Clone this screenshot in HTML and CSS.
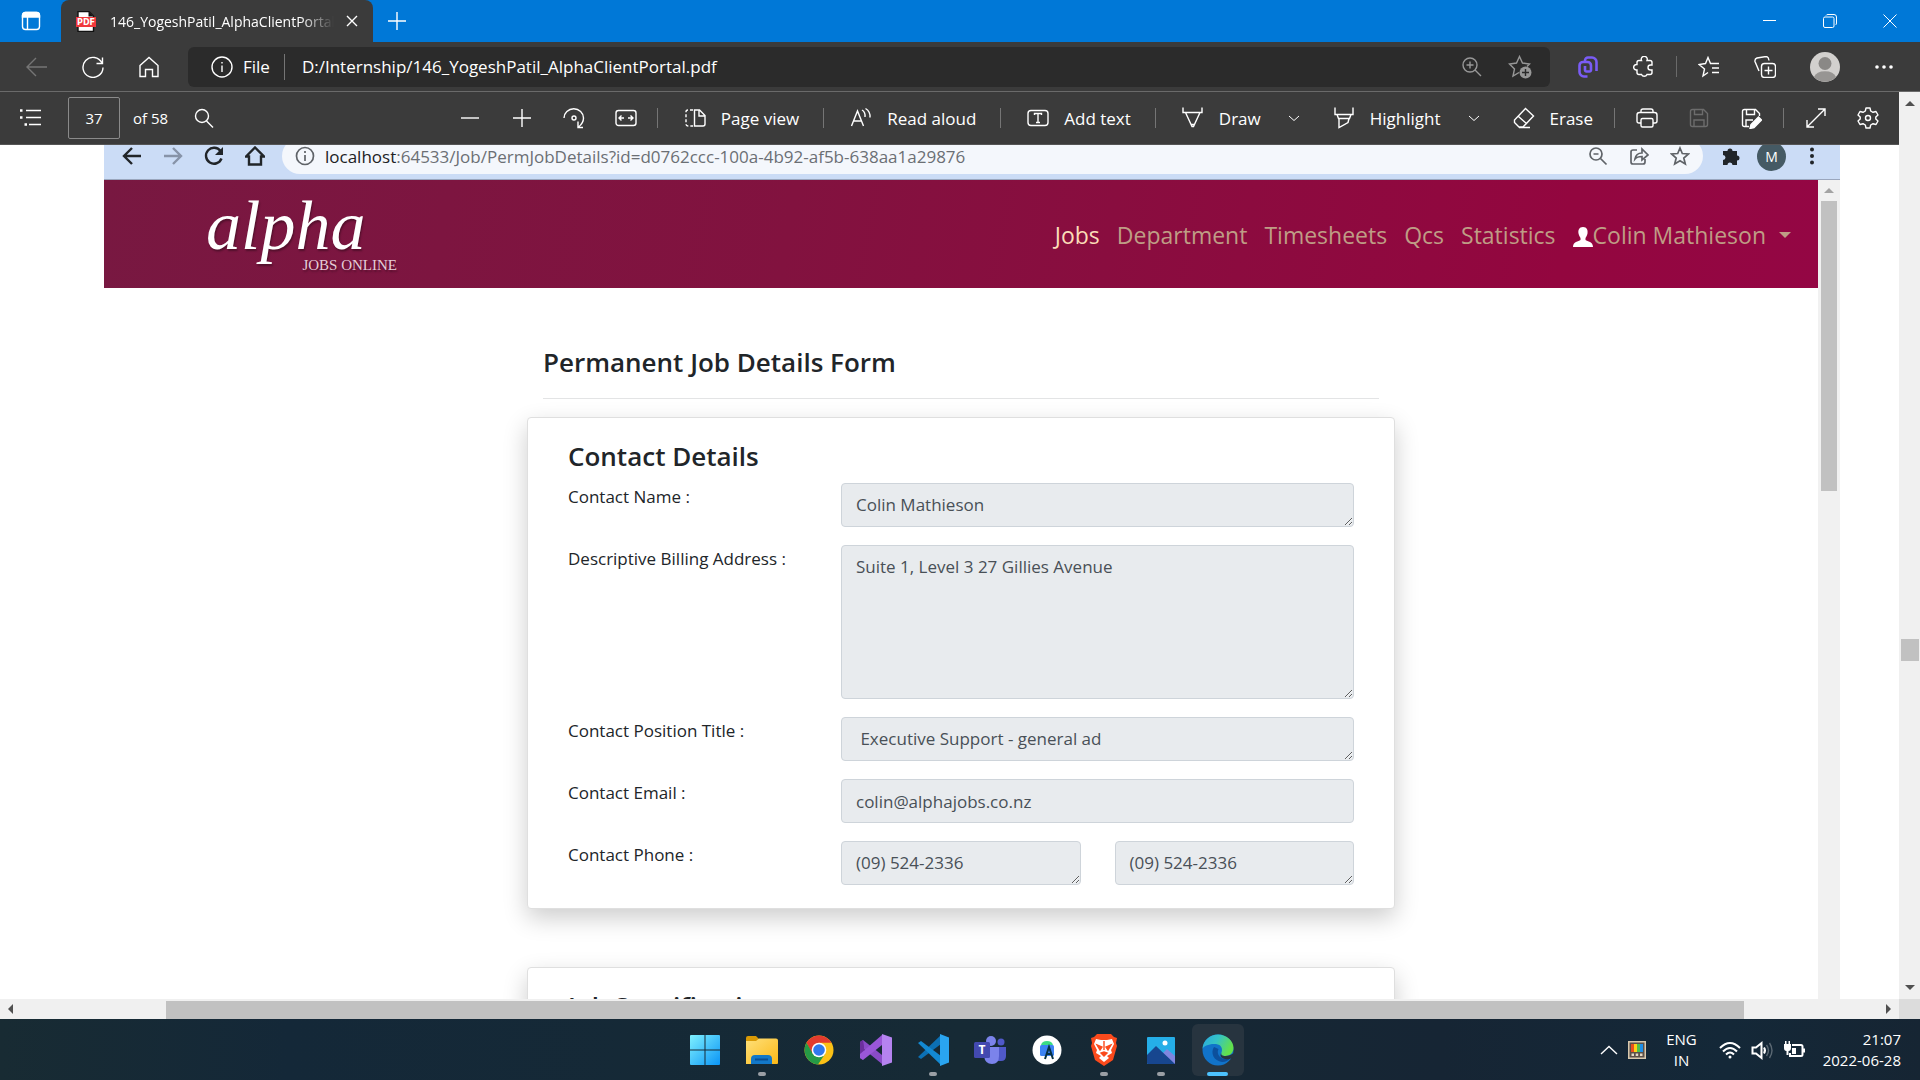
FILE: index.html
```html
<!DOCTYPE html>
<html lang="en">
<head>
<meta charset="utf-8">
<title>146_YogeshPatil_AlphaClientPortal.pdf</title>
<link rel="stylesheet" href="styles.css">
</head>
<body>
<header class="tabbar">
  <button class="bare tab-actions" aria-label="Tab actions"><svg class="i20" viewBox="0 0 20 20"><rect x="1.500" y="1.500" width="17" height="17" rx="3"/><path d="M1.500 6V4.500a3 3 0 0 1 3-3h11a3 3 0 0 1 3 3V6z" fill="currentColor"/><path d="M6.500 6v12.500"/></svg></button>
  <div class="tab">
    <svg class="pdf-icon" viewBox="0 0 20 21"><path d="M2 .5h11l4.500 4.500v15.500H2z" fill="#fff" stroke="#111"/><path d="M12.500.5 17.500 5.500h-5z" fill="#111" stroke="none"/><rect y="6" width="20" height="10" fill="#f0383c" stroke="none"/><text x="10" y="14" text-anchor="middle" class="pdf-word">PDF</text></svg>
    <span class="tab-title">146_YogeshPatil_AlphaClientPortal.pdf</span>
    <button class="bare" aria-label="Close tab"><svg class="i12" viewBox="0 0 12 12"><path d="M1 1l10 10M11 1 1 11"/></svg></button>
  </div>
  <button class="bare new-tab" aria-label="New tab"><svg class="i20" viewBox="0 0 20 20"><path d="M10 1v18M1 10h18"/></svg></button>
  <div class="window-controls">
    <button class="bare" aria-label="Minimize"><svg class="i14" viewBox="0 0 14 14"><path d="M0 6.500h13"/></svg></button>
    <button class="bare" aria-label="Restore"><svg class="i14" viewBox="0 0 14 14"><rect x=".5" y="3" width="10.500" height="10.500" rx="1.500"/><path d="M3 1.500Q3.500.5 5 .5h6A2.500 2.500 0 0 1 13.500 3v6q0 1.500-1 2"/></svg></button>
    <button class="bare" aria-label="Close"><svg class="i14" viewBox="0 0 14 14"><path d="M.5.5l13 13M13.500.5l-13 13"/></svg></button>
  </div>
</header>

<nav class="edge-bar" aria-label="Browser">
  <button class="bare dim" aria-label="Back"><svg class="i22" viewBox="0 0 22 22"><path d="M21 11H1M10 2l-9 9 9 9"/></svg></button>
  <button class="bare" aria-label="Refresh"><svg class="i22" viewBox="0 0 22 22"><path d="M20 7A10 10 0 1 0 21 11.500M20.500 1.500V7.500H14.500"/></svg></button>
  <button class="bare" aria-label="Home"><svg class="i22" viewBox="0 0 22 22"><path d="M2 9.500 11 1.500l9 8V20.500h-5.500v-7h-7v7H2z"/></svg></button>
  <div class="address">
    <svg class="i22" viewBox="0 0 22 22"><circle cx="11" cy="11" r="10"/><path d="M11 9.500V16M11 6v1.500"/></svg>
    <span class="scheme">File</span>
    <input class="url" aria-label="Address" value="D:/Internship/146_YogeshPatil_AlphaClientPortal.pdf">
    <button class="bare muted" aria-label="Zoom"><svg class="i20" viewBox="0 0 20 20"><circle cx="8" cy="8" r="7"/><path d="M8 4.500v7M4.500 8h7M13 13l6 6"/></svg></button>
    <button class="bare muted" aria-label="Add to favourites"><svg class="i24" viewBox="0 0 24 24"><path d="M11 17.500 5 21l1.500-7L1.500 9l7-1L11.500 1.500 14.500 8l7 1-2.500 2.500"/><circle cx="17.500" cy="17.500" r="6" fill="currentColor" stroke="none"/><path d="M17.500 14v7M14 17.500h7" stroke="#2b2b2b"/></svg></button>
  </div>
  <button class="bare clip" aria-label="Clipboard"><svg class="i22" viewBox="0 0 22 22"><path d="M8 5.500V4.500a3 3 0 0 1 3-3h4A4.500 4.500 0 0 1 19.500 6v9M10.500 20.500H7A4.500 4.500 0 0 1 2.500 16V9.500A3.500 3.500 0 0 1 6 6h4.500A3.500 3.500 0 0 1 14 9.500V14a1.500 1.500 0 0 1-1.500 1.500H9.500A1.500 1.500 0 0 1 8 14v-4"/></svg></button>
  <button class="bare" aria-label="Extensions"><svg class="i22" viewBox="0 0 22 22"><path d="M6 4.500h2.500a3 3 0 1 1 5.500 0h3q2 0 2 2V9h-1.500a2.500 2.500 0 0 0 0 5H19v2.500q0 2-2 2h-3a3 3 0 0 1-5.500 0H6q-2 0-2-2V14a2.800 2.800 0 1 1 0-5.500V6.500q0-2 2-2z"/></svg></button>
  <span class="edge-sep"></span>
  <button class="bare" aria-label="Favourites"><svg class="i22" viewBox="0 0 22 22"><path d="M10 16.500 5 20l1.500-7L1 8.500l6.500-1L10 1.500l2.500 6H21M14 12h7M14 16.500h7"/></svg></button>
  <button class="bare" aria-label="Collections"><svg class="i22" viewBox="0 0 22 22"><rect x="7.500" y="7.500" width="14" height="14" rx="3"/><path d="M14.500 10.500v8M10.500 14.500h8M5 15 1 5.500Q.5 3 3 2l9-1.500Q14.500.5 15 4.500"/></svg></button>
  <button class="bare" aria-label="Profile"><svg class="i30" viewBox="0 0 30 30" stroke="none"><circle cx="15" cy="15" r="15" fill="#d2d0ce"/><circle cx="15" cy="11.500" r="6.500" fill="#8a8886"/><path d="M4 25a11.500 8 0 0 1 22 0A15 15 0 0 1 4 25z" fill="#979593"/></svg></button>
  <button class="bare" aria-label="Settings and more"><svg class="i20 solid" viewBox="0 0 20 20"><circle cx="3" cy="10" r="1.800"/><circle cx="10" cy="10" r="1.800"/><circle cx="17" cy="10" r="1.800"/></svg></button>
</nav>

<main class="viewer">
  <div class="viewer-main">
    <div class="pdf-bar" role="toolbar" aria-label="PDF tools">
      <div class="pdf-left">
        <button class="bare" aria-label="Contents"><svg class="i22" viewBox="0 0 22 22"><path d="M6 3.500h15M6 10.500h15M9 17.500h12"/><path d="M0 3.500h2.500M0 10.500h2.500M4.500 17.500H7" stroke-width="2.500"/></svg></button>
        <input class="page-no" aria-label="Page number" value="37">
        <span class="page-count">of 58</span>
        <button class="bare find" aria-label="Find"><svg class="i20" viewBox="0 0 20 20"><circle cx="8" cy="8" r="6.500"/><path d="M12.500 13 19 19.500"/></svg></button>
      </div>
      <div class="pdf-tools">
        <button class="bare" aria-label="Zoom out"><svg class="i22" viewBox="0 0 22 22"><path d="M2 11h18"/></svg></button>
        <button class="bare sp" aria-label="Zoom in"><svg class="i22" viewBox="0 0 22 22"><path d="M2 11h18M11 2v18"/></svg></button>
        <button class="bare sp" aria-label="Rotate"><svg class="i22" viewBox="0 0 22 22"><path d="M1 11A9.500 9 0 0 1 20.500 11Q20.500 16 15.500 20M15 14.500v6h5"/><circle cx="11" cy="11" r="2"/></svg></button>
        <button class="bare sp" aria-label="Fit to width"><svg class="i22" viewBox="0 0 22 22"><rect x="1" y="3.500" width="20" height="15" rx="2.500"/><path d="M9 11H4M6.500 8.500 4 11l2.500 2.500M13 11h5M15.500 8.500 18 11l-2.500 2.500"/></svg></button>
        <span class="sep tight"></span>
        <button class="bare tool"><svg class="i22" viewBox="0 0 22 22"><path d="M9 3H4Q2 3 2 5v12q0 2 2 2h5" stroke-dasharray="3 2"/><path d="M10.500 3h5L21 8.500V17q0 2-2 2h-8.500zM15 3v6h6"/></svg>Page view</button>
        <span class="sep"></span>
        <button class="bare tool"><svg class="i22" viewBox="0 0 22 22"><path d="M1.500 19 7.500 4l6 15M3.500 14h8M12 3q3.500 2 3 7M15.500 1.500q5 3 4.500 9"/></svg>Read aloud</button>
        <span class="sep"></span>
        <button class="bare tool"><svg class="i22" viewBox="0 0 22 22"><rect x="1" y="3.500" width="20" height="15" rx="3"/><path d="M7.500 8V6.500h7V8M11 6.500v9M9 15.500h4"/></svg>Add text</button>
        <span class="sep"></span>
        <button class="bare tool"><svg class="i22" viewBox="0 0 22 22"><path d="M1 .5V5.500H20V.5M3.500 5.500 10 19.500h1.500L18 5.500M9 17.500h3.500"/></svg>Draw</button>
        <button class="bare chev" aria-label="Draw options"><svg class="i14" viewBox="0 0 14 14"><path d="M2 5l5 4.500L12 5"/></svg></button>
        <button class="bare tool after-chev"><svg class="i22" viewBox="0 0 22 22"><path d="M2 .5V7.500H20V.5M4 7.500 5.500 11.500H16.500L18 7.500M6 11.500v9l9-5 1-4"/></svg>Highlight</button>
        <button class="bare chev" aria-label="Highlight options"><svg class="i14" viewBox="0 0 14 14"><path d="M2 5l5 4.500L12 5"/></svg></button>
        <button class="bare tool after-chev"><svg class="i22" viewBox="0 0 22 22"><path d="M12.500 1.500 20.500 9 10 20H6L1.500 15.500V13zM5.500 9.500 14 17M6 20.500h11"/></svg>Erase</button>
        <span class="sep even"></span>
        <button class="bare" aria-label="Print"><svg class="i22" viewBox="0 0 22 22"><path d="M5 16H3Q1 16 1 14V8q0-2.500 2.500-2.500h15Q21 5.500 21 8v6q0 2-2 2h-2M5 5.500V4q0-2 2-2h8q2 0 2 2v1.500"/><rect x="5" y="11.500" width="12" height="8.500" rx="1.500"/></svg></button>
        <button class="bare sp faint" aria-label="Save"><svg class="i22" viewBox="0 0 22 22"><path d="M4.500 2.500h11l4 4V17.500q0 2-2 2h-13q-2 0-2-2V4.500q0-2 2-2zM6.500 2.500V7.500h8v-5M6 19.500v-6.500h10v6.500"/></svg></button>
        <button class="bare sp" aria-label="Save as"><svg class="i22" viewBox="0 0 22 22"><path d="M9 19.500H4.500q-2 0-2-2V4.500q0-2 2-2h11l4 4V9M6.500 2.500V7.500h8v-5M6 19.500v-6.500h7"/><path d="M18.500 10 21.500 13l-7.500 7.500-4 1 1-4z" fill="currentColor"/></svg></button>
        <span class="sep even"></span>
        <button class="bare" aria-label="Full screen"><svg class="i22" viewBox="0 0 22 22"><path d="M2 20 20 2M13 2h7v7M2 13v7h7"/></svg></button>
        <button class="bare sp" aria-label="Settings"><svg class="i22" viewBox="0 0 22 22"><path d="M9 1h4l.7 3 2.300 1.300L19 4.500l2 3.500-2.200 2v2L21 14l-2 3.500-3-.8L13.700 18 13 21H9l-.7-3L6 16.700l-3 .8L1 14l2.200-2v-2L1 8l2-3.500 3 .8L8.300 4z" stroke-linejoin="round"/><circle cx="11" cy="11" r="2.500"/></svg></button>
      </div>
    </div>

    <div class="document">
      <div class="sheet">
        <div class="chrome-bar">
          <svg class="i20" viewBox="0 0 20 20"><path d="M19 10H3M10 2l-8 8 8 8"/></svg>
          <svg class="i20 pale" viewBox="0 0 20 20"><path d="M1 10h16M10 2l8 8-8 8"/></svg>
          <svg class="i20" viewBox="0 0 20 20"><path d="M16.500 5A8 8 0 1 0 17.500 12.500"/><path d="M19 1v8h-8z" fill="currentColor" stroke="none"/></svg>
          <svg class="i20" viewBox="0 0 20 20"><path d="M1 10.500 10 1.500l9 9h-3V18.500H4v-8z"/></svg>
          <div class="omnibox">
            <svg class="i20" viewBox="0 0 20 20"><circle cx="10" cy="10" r="8.500"/><path d="M10 9v6M10 5v2"/></svg>
            <span class="omni-url"><b>localhost</b>:64533/Job/PermJobDetails?id=d0762ccc-100a-4b92-af5b-638aa1a29876</span>
            <svg class="i20" viewBox="0 0 20 20"><circle cx="8" cy="8" r="6"/><path d="M5.500 8h5M12.500 12.500l6 6"/></svg>
            <svg class="i20" viewBox="0 0 20 20"><path d="M8 4H4Q2 4 2 6v10q0 2 2 2h10q2 0 2-2v-3M6 13q1-6 7-6V3l6 6-6 5v-3.500q-5 0-7 2.500z"/></svg>
            <svg class="i20" viewBox="0 0 20 20"><path d="M10 2l2.300 5.500 6.200.5-4.700 4 1.500 6-5.300-3.200L4.700 18l1.500-6-4.700-4 6.200-.5z"/></svg>
          </div>
          <svg class="i20" viewBox="0 0 20 20"><path d="M2 5h4.500a2.500 2.500 0 1 1 5 0H16v4.500a2.500 2.500 0 1 1 0 5V19h-4.500a2.500 2.500 0 0 0-5 0H2v-5a2.500 2.500 0 0 0 0-5z" fill="currentColor" stroke="none"/></svg>
          <span class="chrome-avatar">M</span>
          <svg class="i20 solid" viewBox="0 0 20 20"><circle cx="10" cy="3.500" r="2"/><circle cx="10" cy="10" r="2"/><circle cx="10" cy="16.500" r="2"/></svg>
        </div>

        <div class="site">
          <div class="site-main">
            <div class="navbar">
              <a class="brand" href="#"><span class="brand-name">alpha</span><span class="brand-sub">JOBS ONLINE</span></a>
              <nav class="links" aria-label="Site">
                <a class="on" href="#">Jobs</a>
                <a href="#">Department</a>
                <a href="#">Timesheets</a>
                <a href="#">Qcs</a>
                <a href="#">Statistics</a>
                <a class="user" href="#"><svg class="person" viewBox="0 0 20 20"><path d="M10 0c4 0 5 3 4.500 6.500C14 9 13 10 12.500 11v2c2 1.500 7.500 1.500 7.500 7H0c0-5.500 5.500-5.500 7.500-7v-2C7 10 6 9 5.500 6.500 5 3 6 0 10 0z"/></svg>Colin Mathieson<span class="caret"></span></a>
              </nav>
            </div>
            <div class="page-head"><h1>Permanent Job Details Form</h1></div>
            <form class="card">
              <h2>Contact Details</h2>
              <div class="row"><label for="name">Contact Name :</label><textarea id="name" rows="1" readonly>Colin Mathieson</textarea></div>
              <div class="row"><label for="addr">Descriptive Billing Address :</label><textarea id="addr" class="tall" rows="5" readonly>Suite 1, Level 3 27 Gillies Avenue</textarea></div>
              <div class="row"><label for="pos">Contact Position Title :</label><textarea id="pos" rows="1" readonly> Executive Support - general ad</textarea></div>
              <div class="row"><label for="mail">Contact Email :</label><input id="mail" type="email" value="colin@alphajobs.co.nz" readonly></div>
              <div class="row"><label for="phone">Contact Phone :</label><div class="pair"><textarea id="phone" rows="1" readonly>(09) 524-2336</textarea><textarea aria-label="Second contact phone" rows="1" readonly>(09) 524-2336</textarea></div></div>
            </form>
            <section class="card"><h2>Job Specification</h2></section>
          </div>
          <div class="inner-scroll"><span class="arrow up soft"></span><span class="inner-thumb"></span></div>
        </div>
      </div>
    </div>
    <div class="hscroll"><span class="arrow left"></span><div class="htrack"><span class="hthumb"></span></div><span class="arrow right"></span></div>
  </div>
  <div class="vscroll"><span class="arrow up"></span><div class="vtrack"><span class="vthumb"></span></div><span class="arrow down"></span><span class="corner"></span></div>
</main>

<footer class="taskbar">
  <div class="apps">
    <button class="bare app" aria-label="Start"><svg class="i32" viewBox="0 0 32 32" stroke="none"><defs><linearGradient id="win" x2="1" y2="1"><stop stop-color="#7ff1ff"/><stop offset="1" stop-color="#0a94f5"/></linearGradient></defs><path d="M1 2q0-1 1-1h13.500v14.500H1zM16.500 1H30q1 0 1 1v13.500H16.500zM1 16.500h14.500V31H2q-1 0-1-1zM16.500 16.500H31V30q0 1-1 1H16.500z" fill="url(#win)"/></svg></button>
    <button class="bare app open" aria-label="File Explorer"><svg class="i32" viewBox="0 0 32 32" stroke="none"><defs><linearGradient id="fold" x2="1" y2="1"><stop stop-color="#ffe07a"/><stop offset="1" stop-color="#fbb917"/></linearGradient></defs><path d="M0 4q0-2 2-2h8l3 3v5H0z" fill="#d99a06"/><path d="M0 7h10l3-2.500h17q2 0 2 2V29q0 1-1 1H0z" fill="url(#fold)"/><path d="M5 30v-5q0-4 4-4h13q4 0 4 4v5z" fill="#1378c8"/><path d="M9 25.500h13" stroke="#0a4f94" stroke-width="2"/></svg></button>
    <button class="bare app" aria-label="Chrome"><svg class="i32" viewBox="0 0 32 32" stroke="none"><circle cx="16" cy="16" r="14.500" fill="#fbc116"/><path d="M3.500 8.700A14.500 14.500 0 0 1 28.500 8.700H16L9 20z" fill="#e33b2e"/><path d="M3.500 8.700A14.500 14.500 0 0 0 15 30.500L22.300 19.600 9.700 19.600z" fill="#259a46"/><circle cx="16" cy="16" r="7.300" fill="#fff"/><circle cx="16" cy="16" r="5.800" fill="#3079ed"/></svg></button>
    <button class="bare app" aria-label="Visual Studio"><svg class="i32" viewBox="0 0 32 32" stroke="none"><path d="M3 6 22 21v9L0 12V8z" fill="#8a4bc8"/><path d="M0 8l3-2 1 6v8l-1 6-3-2z" fill="#6b2f9e"/><path d="M3 26 22 11V1L0 20v4z" fill="#9a57d8"/><path d="M22 0l10 3.500v25L22 32z" fill="#b583f0"/></svg></button>
    <button class="bare app open" aria-label="Visual Studio Code"><svg class="i32" viewBox="0 0 32 32" stroke="none"><path d="M1 23l3 2L24 10V1z" fill="#0c70b4"/><path d="M1 9l3-2 20 15v9z" fill="#1389d2"/><path d="M23 0l9 3.500v25L23 32z" fill="#2aa5f0"/></svg></button>
    <button class="bare app" aria-label="Teams"><svg class="i32" viewBox="0 0 32 32" stroke="none"><circle cx="27" cy="8" r="3.500" fill="#5059c9"/><path d="M22 13h10v9q0 5-5 5h-5z" fill="#5059c9"/><circle cx="17" cy="7" r="5" fill="#7b83eb"/><path d="M10 13h15v9q0 8-7 8t-8-8z" fill="#7b83eb"/><rect y="8" width="16" height="16" rx="1.500" fill="#4349b0"/><text x="8" y="20" text-anchor="middle" class="teams-t">T</text></svg></button>
    <button class="bare app" aria-label="Android Studio"><svg class="i32" viewBox="0 0 32 32" stroke="none"><ellipse cx="16" cy="16" rx="14.500" ry="14.500" fill="#fff"/><path d="M10 11q1-4 6-4t6 4z" fill="#3ddc84"/><rect x="9" y="11" width="14" height="11" rx="1.500" fill="#3c83f3"/><path d="M14 25 18 13l4 12M15.500 20h5" stroke="#073042" stroke-width="2" fill="none"/></svg></button>
    <button class="bare app open" aria-label="Brave"><svg class="i32" viewBox="0 0 32 32" stroke="none"><path d="M9 0h14l3 3 3 1-1 5 1 3-4 14-9 6-9-6L3 12l1-3-1-5 3-1z" fill="#fb4a1c"/><path d="M8 5l5 1h6l5-1 2 5-3 6 1 3-5 3 2 2-5 4-5-4 2-2-5-3 1-3-3-6z" fill="#fff"/><path d="M9 11l5 2-2 3zM23 11l-5 2 2 3zM13 19l3 3 3-3-3-1zM16 7v9" fill="#fb4a1c" stroke="#fb4a1c"/></svg></button>
    <button class="bare app open" aria-label="Photos"><svg class="i32" viewBox="0 0 32 32" stroke="none"><rect x="2" y="3" width="28" height="27" rx="1" fill="#25aee8"/><path d="M30 30V22L22 15l-6 6 9 9z" fill="#7f86e0"/><path d="M2 21l9-9 19 18H3q-1 0-1-1z" fill="#17468f"/><circle cx="20" cy="9" r="2.500" fill="#fff"/></svg></button>
    <button class="bare app open current" aria-label="Edge"><svg class="i32" viewBox="0 0 32 32" stroke="none"><defs><linearGradient id="ed" x2="1" y2=".4"><stop stop-color="#28a7e0"/><stop offset=".5" stop-color="#35c3c4"/><stop offset="1" stop-color="#63e04a"/></linearGradient></defs><circle cx="16" cy="16" r="15.500" fill="#1173c9"/><path d="M.5 15C1 6 8 .5 16 .5 25 .5 31.500 7 31.500 14c0 5-4 8-8 8-3.500 0-5-1.500-4-3.500 1.500-3 0-8-5.500-8.500C7 9.500 1.500 12 .5 15z" fill="url(#ed)"/><path d="M12 13c-4 6 0 14 8 15 4 0 7-2 8.500-4-4 2-10 1-12-3-1-2-1-4 0-6z" fill="#0c4f9c"/><path d="M19.500 18.500C18.500 21 20 22 23.500 22c3 0 6-1 8-3l-1 5-3 1q-5 1-8-1.500-2-2 0-5z" fill="#27343f"/></svg></button>
  </div>
  <div class="tray">
    <svg class="i18" viewBox="0 0 18 18"><path d="M1 13l8-7.500L17 13"/></svg>
    <svg class="i18" viewBox="0 0 18 18" stroke="none"><rect width="18" height="18" fill="#d8c9ae"/><rect x="1.500" y="1.500" width="15" height="15" fill="#5b5048"/><path d="M3 3h3v8H3z" fill="#e8501e"/><path d="M6 3h3v8H6z" fill="#fcd116"/><path d="M9 3h3v8H9z" fill="#4fc04a"/><path d="M12 3h3v8h-3z" fill="#1e90e8"/><path d="M3.500 12.500h2.500v2.500H3.500zM7.700 12.500h2.500v2.500H7.700zM12 12.500h2.500v2.500H12z" fill="#e4d8c4"/></svg>
    <span class="lang">ENG<br>IN</span>
    <svg class="i22 bold" viewBox="0 0 22 22"><path d="M1 9Q11-1 21 9M4 12.500q7-7 14 0M7 15.500q4-4 8 0"/><circle cx="11" cy="18" r="1.500" fill="currentColor" stroke="none"/></svg>
    <svg class="i22" viewBox="0 0 22 22"><path d="M1.500 8.500H5l5.500-4.500v15L5 14.500H1.500zM13 8.500q2 3 0 6" stroke-width="2"/><path d="M15.500 6q4 5.500 0 11M18.500 4q5 7.500 0 15" opacity=".3"/></svg>
    <svg class="i22 bold" viewBox="0 0 22 22"><path d="M9 6h9q1.500 0 1.500 1.500v8q0 1.500-1.500 1.500H7v-3M21 9.500v4"/><path d="M1 5h7v4q0 3-2.500 3v4h-2v-4Q1 12 1 9zM2 2h1.500v3H2zM5.500 2H7v3H5.500zM9 9h4v6H9z" fill="currentColor" stroke="none"/></svg>
    <time class="clock">21:07<br>2022-06-28</time>
  </div>
</footer>
</body>
</html>
```
FILE: styles.css
```css
* { box-sizing: border-box; }
body {
  margin: 0;
  height: 100vh;
  display: flex;
  flex-direction: column;
  overflow: hidden;
  background: #fff;
  color: #fff;
  font-family: "Open Sans", "Noto Sans", sans-serif;
  font-size: 17px;
}
svg { display: block; flex: none; fill: none; stroke: currentColor; stroke-width: 1.4; }
svg[stroke="none"] { stroke: none; }
svg.solid { fill: currentColor; stroke: none; }
svg.bold { stroke-width: 2; }
.i12 { width: 12px; height: 12px; }
.i14 { width: 14px; height: 14px; stroke-width: 1; }
.i18 { width: 18px; height: 18px; }
.i20 { width: 20px; height: 20px; }
.i22 { width: 22px; height: 22px; }
.i24 { width: 24px; height: 24px; }
.i30 { width: 30px; height: 30px; }
.i32 { width: 32px; height: 32px; }
.bare {
  flex: none;
  display: flex;
  align-items: center;
  padding: 0;
  border: 0;
  background: none;
  color: inherit;
  font: inherit;
}

/* Tab strip */
.tabbar { flex: none; display: flex; height: 42px; background: #0078d7; }
.tab-actions { width: 61px; padding-left: 21px; }
.tab {
  display: flex;
  align-items: center;
  width: 312px;
  padding: 0 15px;
  gap: 14px;
  background: #3b3b3b;
  border-radius: 8px 8px 0 0;
}
.pdf-icon { width: 20px; height: 21px; }
.pdf-word { font: bold 8px "DejaVu Sans", sans-serif; fill: #fff; stroke: none; }
.tab-title {
  flex: 1;
  overflow: hidden;
  white-space: nowrap;
  font-size: 14px;
  mask-image: linear-gradient(to right, #000 85%, transparent);
}
.tab .bare { margin-left: -2px; }
.new-tab { padding-left: 14px; }
.window-controls { display: flex; gap: 46px; margin-left: auto; padding-right: 23px; }

/* Browser toolbar */
.edge-bar {
  flex: none;
  display: flex;
  align-items: center;
  height: 50px;
  padding: 0 26px;
  gap: 34px;
  background: #3b3b3b;
  border-bottom: 1px solid #6a6a6a;
}
.dim { color: #757575; }
.muted { color: #989898; }
.faint { color: #6c6c6c; }
.address {
  flex: 1;
  display: flex;
  align-items: center;
  height: 40px;
  min-width: 0;
  margin: 0 -7px 0 -6px;
  padding: 0 18px 0 23px;
  background: #2b2b2b;
  border-radius: 6px;
}
.scheme { padding: 0 14px 0 10px; border-right: 1px solid #757575; line-height: 26px; }
.url {
  flex: 1;
  min-width: 0;
  padding: 0 0 0 17px;
  border: 0;
  background: none;
  color: #fff;
  font: inherit;
}
.address .bare { margin-left: 26px; }
.clip { color: #7a5cf5; }
.clip svg { stroke-width: 2.6; }
.edge-sep { width: 1px; height: 21px; margin: 0 -13px; background: #6a6a6a; }

/* Viewer frame */
.viewer { flex: 1; min-height: 0; display: flex; }
.viewer-main { flex: 1; min-width: 0; display: flex; flex-direction: column; }
.pdf-bar {
  flex: none;
  display: flex;
  align-items: center;
  justify-content: space-between;
  height: 53px;
  padding: 0 20px;
  background: #3b3b3b;
  border-bottom: 1px solid #555;
}
.pdf-left, .pdf-tools { display: flex; align-items: center; }
.page-no {
  width: 52px;
  height: 42px;
  margin: 0 13px 0 26px;
  border: 1px solid #8a8a8a;
  border-radius: 2px;
  background: none;
  color: #fff;
  font: inherit;
  font-size: 15px;
  text-align: center;
}
.page-count { font-size: 15px; }
.find { margin-left: 26px; }
.tool { gap: 15px; }
.sp { margin-left: 30px; }
.sep { width: 1px; height: 20px; margin: 0 26px 0 24px; background: #757575; }
.sep.tight { margin-left: 20px; }
.sep.even { margin: 0 21px; }
.chev { margin-left: 26px; }
.after-chev { margin-left: 32px; }

/* Scrollbars */
.vscroll {
  flex: none;
  width: 21px;
  display: flex;
  flex-direction: column;
  align-items: center;
  background: #f0f0f0;
  padding-top: 9px;
}
.vtrack { flex: 1; width: 18px; display: flex; flex-direction: column; }
.vtrack::before { content: ""; flex: 531 1 0; }
.vtrack::after { content: ""; flex: 323 1 0; }
.vthumb { height: 22px; background: #c1c1c1; }
.corner { width: 21px; height: 20px; margin-top: 9px; background: #dcdcdc; }
.hscroll { flex: none; display: flex; align-items: center; height: 20px; padding: 0 8px; background: #f0f0f0; }
.htrack { flex: 1; height: 18px; margin-top: 2px; display: flex; }
.htrack::before { content: ""; flex: 153 1 0; }
.htrack::after { content: ""; flex: 142 1 0; }
.hthumb { flex: 1578 1 0; background: #c1c1c1; }
.arrow { width: 0; height: 0; border: 5px solid transparent; }
.arrow.up { border-bottom-color: #505050; border-top: 0; }
.arrow.down { border-top-color: #505050; border-bottom: 0; }
.arrow.left { border-right-color: #505050; border-left: 0; }
.arrow.right { border-left-color: #505050; border-right: 0; }
.arrow.soft { border-bottom-color: #a3a3a3; }

/* PDF page */
.document { flex: 1; min-height: 0; overflow: hidden; padding: 0 59px 0 104px; }
.sheet { color: #212529; }
.chrome-bar {
  display: flex;
  align-items: center;
  height: 47px;
  margin-top: -12px;
  padding: 0 18px;
  gap: 21px;
  background: #cbdcf6;
  border-bottom: 1px solid #9aa6bd;
}
.chrome-bar svg { stroke-width: 2.4; }
.chrome-bar svg.solid { stroke: none; }
.pale { color: #8793a8; }
.omnibox {
  flex: 1;
  display: flex;
  align-items: center;
  height: 36px;
  margin: 0 -3px 0 -4px;
  padding: 0 13px;
  gap: 21px;
  border-radius: 18px;
  background: #f4f7fc;
  color: #5f6368;
}
.chrome-bar .omnibox svg { stroke-width: 1.7; }
.omni-url { flex: 1; margin-left: -11px; white-space: nowrap; color: #6b6f74; }
.omni-url b { font-weight: 400; color: #202124; }
.chrome-avatar {
  display: grid;
  place-items: center;
  width: 29px;
  height: 29px;
  margin: 0 -5px;
  border-radius: 50%;
  background: #455a64;
  color: #fff;
  font-size: 14px;
}
.site { display: flex; }
.site-main { flex: 1; min-width: 0; }
.navbar {
  display: flex;
  align-items: center;
  justify-content: space-between;
  height: 108px;
  padding: 0 27px 0 102px;
  background: linear-gradient(100deg, #781841, #82123f 40%, #93063f 85%, #940644);
}
.brand { display: flex; flex-direction: column; width: 191px; color: #fff; text-decoration: none; font-family: "Liberation Serif", serif; text-shadow: 1px 2px 2px #0005; }
.brand-name { font-size: 70px; line-height: 62px; font-style: italic; }
.brand-sub { align-self: flex-end; font-size: 15px; line-height: 16px; color: #e6cdd8; }
.links { display: flex; align-items: center; gap: 17px; padding-top: 2px; font-size: 23px; }
.links a { color: #bf9d85; text-decoration: none; }
.links .on { color: #fbdcb8; }
.links .user { display: flex; align-items: center; }
.person { width: 20px; height: 20px; margin-top: 4px; fill: #fff; stroke: none; }
.caret { margin-left: 13px; border: 6px solid transparent; border-top-color: #bf9d85; border-bottom: 0; }
.page-head { width: 836px; max-width: 100%; margin: 0 auto 18px; padding: 57px 0 19px; border-bottom: 1px solid #e3e4e5; }
h1, h2 { margin: 0; font-size: 26px; line-height: 34px; font-weight: 600; }
.card {
  width: 868px;
  max-width: 100%;
  margin: 0 auto 58px;
  padding: 21px 40px 23px;
  display: flex;
  flex-direction: column;
  gap: 18px;
  border: 1px solid #dfdfdf;
  border-radius: 4px;
  background: #fff;
  box-shadow: 0 9px 24px #0003;
}
.card h2 { margin-bottom: -8px; }
.row { display: grid; grid-template-columns: 273px 1fr; align-items: start; font-size: 17px; line-height: 28px; }
.row textarea, .row input {
  display: block;
  width: 100%;
  height: 44px;
  padding: 7px 14px;
  border: 1px solid #ced4da;
  border-radius: 4px;
  background: #e8ebee;
  color: #495057;
  font: inherit;
  overflow: hidden;
}
.row .tall { height: 154px; }
.pair { display: grid; grid-template-columns: 1fr 1fr; gap: 34px; }
.inner-scroll {
  flex: none;
  width: 22px;
  display: flex;
  flex-direction: column;
  align-items: center;
  gap: 8px;
  padding-top: 8px;
  background: #f1f1f1;
}
.inner-thumb { width: 16px; height: 290px; background: #c1c1c1; }

/* Taskbar */
.taskbar {
  flex: none;
  display: grid;
  grid-template-columns: 1fr auto 1fr;
  height: 61px;
  background: linear-gradient(to right, #182b33, #142838 15%, #162a35 50%, #162534 75%, #142838 90%, #162533);
}
.apps { grid-column: 2; display: flex; gap: 5px; align-items: center; padding-left: 2px; }
.app { flex-direction: column; justify-content: center; position: relative; width: 52px; height: 52px; border-radius: 6px; }
.app.open::after {
  content: "";
  position: absolute;
  bottom: 0;
  width: 8px;
  height: 4px;
  border-radius: 2px;
  background: #9a9fa5;
}
.app.current { background: #27343f; }
.app.current::after { width: 21px; background: #4cc2ff; }
.teams-t { font: bold 12px "Open Sans", sans-serif; fill: #fff; }
.tray { display: flex; align-items: center; justify-content: flex-end; gap: 10px; padding-right: 19px; line-height: 21px; font-size: 15px; }
.lang { margin: 0 12px 0 10px; text-align: center; }
.clock { margin-left: 8px; text-align: right; }
```
